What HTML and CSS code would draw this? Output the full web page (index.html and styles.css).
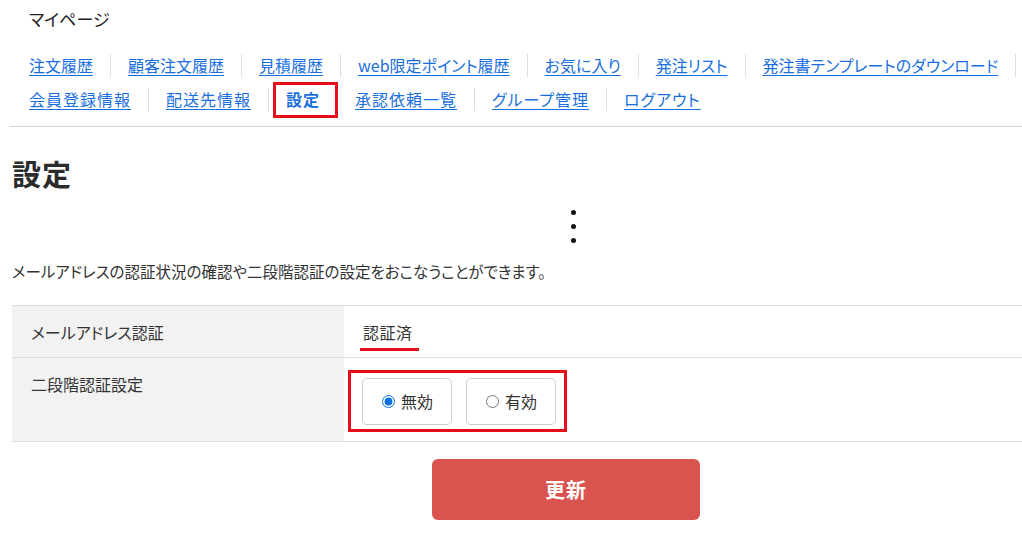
FILE: index.html
```html
<!DOCTYPE html>
<html lang="ja">
<head>
    <meta charset="UTF-8">
    <meta name="viewport" content="width=device-width, initial-scale=1.0">
    <title>設定 | マイページ</title>
    <link rel="stylesheet" href="styles.css">
</head>
<body>
    <div class="page">
        <div class="mypage-title">マイページ</div>

        <nav class="mypage-nav">
            <div class="nav-row">
                <span class="nav-item"><a href="#">注文履歴</a></span>
                <span class="nav-item"><a href="#">顧客注文履歴</a></span>
                <span class="nav-item"><a href="#">見積履歴</a></span>
                <span class="nav-item"><a href="#">web限定ポイント履歴</a></span>
                <span class="nav-item"><a href="#">お気に入り</a></span>
                <span class="nav-item"><a href="#">発注リスト</a></span>
                <span class="nav-item"><a href="#">発注書テンプレートのダウンロード</a></span>
            </div>
            <div class="nav-row">
                <span class="nav-item"><a href="#">会員登録情報</a></span>
                <span class="nav-item"><a href="#">配送先情報</a></span>
                <span class="nav-item current"><a href="#">設定</a></span>
                <span class="nav-item"><a href="#">承認依頼一覧</a></span>
                <span class="nav-item"><a href="#">グループ管理</a></span>
                <span class="nav-item last"><a href="#">ログアウト</a></span>
            </div>
        </nav>

        <main class="content">
            <h1 class="page-heading">設定</h1>

            <div class="omitted">
                <span class="dot"></span>
                <span class="dot"></span>
                <span class="dot"></span>
            </div>

            <p class="lead">メールアドレスの認証状況の確認や二段階認証の設定をおこなうことができます。</p>

            <table class="settings">
                <tr>
                    <th>メールアドレス認証</th>
                    <td><span class="status marked">認証済</span></td>
                </tr>
                <tr>
                    <th>二段階認証設定</th>
                    <td>
                        <div class="radio-group">
                            <label class="radio-btn">
                                <input type="radio" name="twofactor" value="0" checked>
                                <span>無効</span>
                            </label>
                            <label class="radio-btn">
                                <input type="radio" name="twofactor" value="1">
                                <span>有効</span>
                            </label>
                        </div>
                    </td>
                </tr>
            </table>

            <div class="actions">
                <button class="button-update">更新</button>
            </div>
        </main>
    </div>
</body>
</html>
```

FILE: styles.css
```css
html, body {
    overflow: hidden;
}

body {
    margin: 0;
    background-color: #fff;
    color: #333;
    font-family: "Noto Sans CJK JP", "Noto Sans", sans-serif;
    font-feature-settings: "palt";
}

.page {
    width: 1108px;
    padding-left: 12px;
}

.mypage-title {
    padding: 6px 0 0 17px;
    font-size: 17px;
    line-height: 26px;
    color: #222;
}

/* Mypage navigation */
.mypage-nav {
    margin-top: 22px;
    margin-left: -2px;
    padding: 0 0 15px 2px;
    border-bottom: 1px solid #d6d6d6;
}

.nav-row {
    display: flex;
    align-items: center;
    height: 23px;
}

.nav-row + .nav-row {
    margin-top: 11px;
}

.nav-item {
    position: relative;
    padding: 0 17px;
    border-right: 1px solid #ddd;
    line-height: 23px;
    font-size: 16px;
    letter-spacing: 0;
    white-space: nowrap;
}

/* second row is mostly kanji, give it a bit more room */
.nav-row + .nav-row .nav-item {
    letter-spacing: 1px;
}

.nav-item.last {
    border-right: none;
}

.nav-item a {
    color: #1a6fe0;
    text-underline-offset: 3px;
}

.nav-item.current a {
    font-weight: bold;
    text-decoration: none;
}

.nav-item.current::after {
    content: '';
    position: absolute;
    top: -6px;
    bottom: -7px;
    left: 4px;
    right: -1px;
    border: 3px solid #e50e1a;
}

/* Main content */
.page-heading {
    margin: 28px 0 0;
    font-size: 29px;
    line-height: 36px;
    letter-spacing: 1px;
    color: #2b2b2b;
}

.omitted {
    display: flex;
    flex-direction: column;
    align-items: center;
    gap: 9px;
    width: 5px;
    margin: 19px 0 0 559px;
}

.dot {
    width: 5px;
    height: 5px;
    border-radius: 50%;
    background-color: #111;
}

.lead {
    margin: 17px 0 0;
    font-size: 15.5px;
    line-height: 22px;
    color: #333;
}

.settings {
    width: 100%;
    margin-top: 23px;
    border-collapse: collapse;
    font-size: 16px;
}

.settings tr {
    border-top: 1px solid #ddd;
    border-bottom: 1px solid #ddd;
}

.settings th {
    width: 294px;
    padding: 18px 19px 16px;
    background-color: #f2f2f2;
    font-weight: normal;
    text-align: left;
    vertical-align: top;
    line-height: 17px;
    color: #333;
}

.settings td {
    padding: 18px 18px 16px;
    vertical-align: top;
    line-height: 17px;
}

.status {
    display: inline-block;
    margin-left: 1px;
    letter-spacing: 0.5px;
}

/* red underline marking the status */
.marked {
    position: relative;
}

.marked::after {
    content: '';
    position: absolute;
    left: -3px;
    right: -6px;
    bottom: -10px;
    height: 3px;
    background-color: #e50e1a;
}

.radio-group {
    position: relative;
    display: inline-flex;
    gap: 14px;
    margin-top: 2px;
}

.radio-group::after {
    content: '';
    position: absolute;
    top: -8px;
    bottom: -7px;
    left: -14px;
    right: -11px;
    border: 3px solid #e50e1a;
}

.radio-btn {
    display: flex;
    align-items: center;
    gap: 3px;
    width: 90px;
    height: 47px;
    box-sizing: border-box;
    padding-left: 19px;
    border: 1px solid #ccc;
    border-radius: 5px;
    background-color: #fff;
    font-size: 16px;
    cursor: pointer;
}

.radio-btn input {
    margin: 0 3px 0 0;
    accent-color: #0a72e0;
}

.actions {
    display: flex;
    justify-content: center;
    margin-top: 17px;
}

.button-update {
    width: 268px;
    height: 61px;
    border: none;
    border-radius: 6px;
    background-color: #d9544f;
    color: #fff;
    font-family: inherit;
    font-size: 20px;
    font-weight: bold;
    letter-spacing: 1px;
    cursor: pointer;
}

.button-update:hover {
    opacity: 0.9;
}
```
